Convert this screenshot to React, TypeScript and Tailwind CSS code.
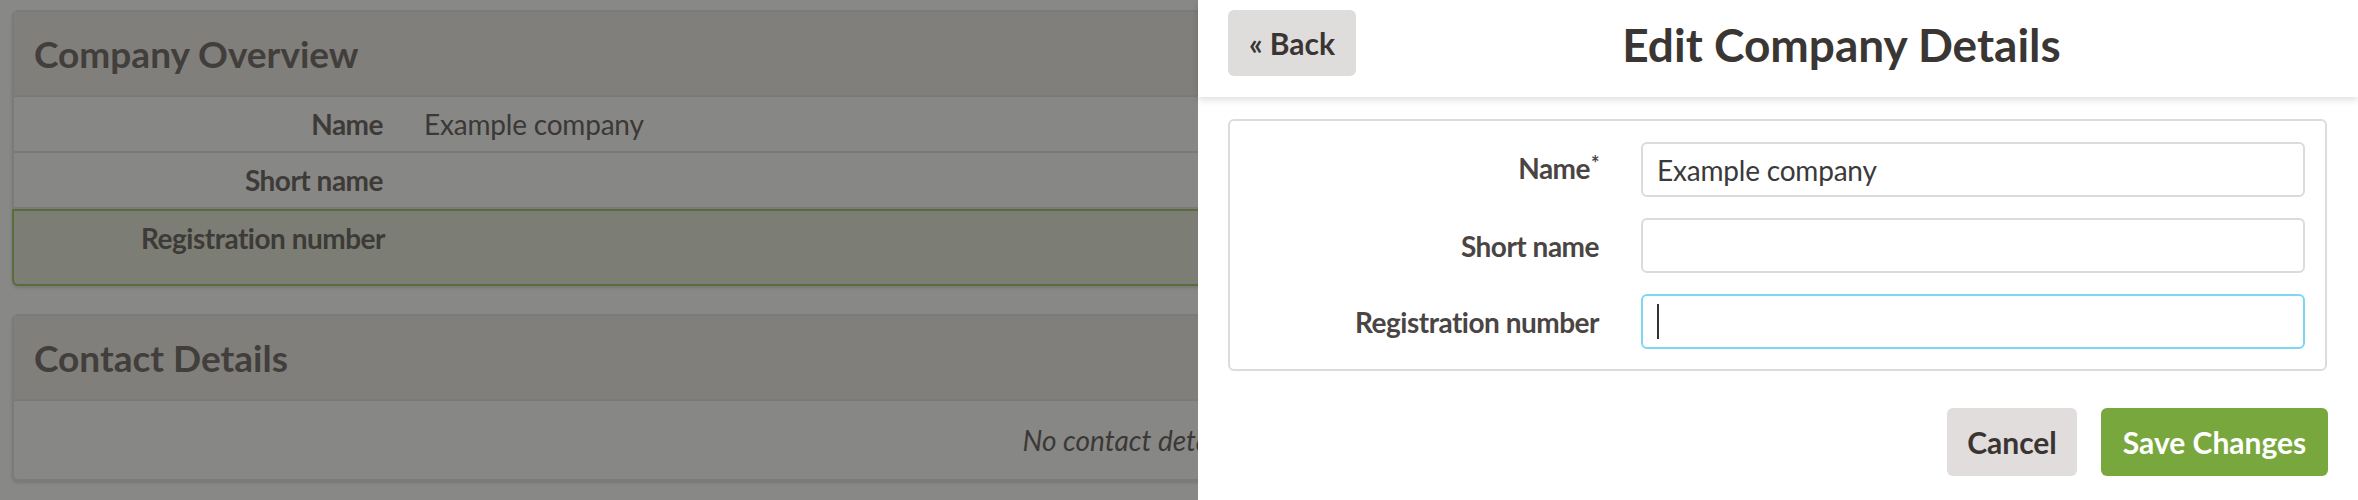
import React from "react";

function LeftRow({
  label,
  value,
  highlight,
}: {
  label: string;
  value?: string;
  highlight?: boolean;
}) {
  if (highlight) {
    return (
      <div className="-mx-[2px] -mb-[2px] flex h-[77px] items-start rounded-b-[6px] border-2 border-[#5b6b3b] bg-[#7c7e75] pt-[13px]">
        <div className="w-[371px] shrink-0 text-right text-[28px] font-bold leading-[28px] tracking-[-0.5px] text-[#3d3a37]">
          {label}
        </div>
        <div className="ml-[41px] text-[28px] leading-[28px] text-[#3b3836]">{value}</div>
      </div>
    );
  }
  return (
    <div className="flex h-[56px] items-center border-b-2 border-[#7b7a78]">
      <div className="w-[369px] shrink-0 text-right text-[28px] font-bold leading-[28px] tracking-[-0.5px] text-[#3d3a37]">
        {label}
      </div>
      <div className="ml-[41px] text-[28px] leading-[28px] tracking-[-0.2px] text-[#3b3836]">{value}</div>
    </div>
  );
}

function Field({
  label,
  required,
  value,
  focused,
}: {
  label: string;
  required?: boolean;
  value?: string;
  focused?: boolean;
}) {
  return (
    <div className="flex items-center">
      <div className="w-[369px] shrink-0 text-right text-[28px] font-bold leading-[28px] tracking-[-0.5px] text-[#4a4543]">
        {label}
        {required && <span className="relative -top-[8px] ml-[1px] text-[20px]">*</span>}
      </div>
      <div
        className={
          focused
            ? "ml-[42px] flex h-[55px] flex-1 items-center rounded-[6px] border-2 border-[#7dd7f3] pl-[14px]"
            : "ml-[42px] flex h-[55px] flex-1 items-center rounded-[6px] border-2 border-[#dcdada] pl-[14px]"
        }
      >
        {value && <span className="text-[28px] leading-[28px] tracking-[-0.2px] text-[#3a3a3a]">{value}</span>}
        {focused && <span className="block h-[35px] w-[2px] bg-[#333333]" />}
      </div>
    </div>
  );
}

export default function App() {
  return (
    <div className="relative h-[500px] w-[2358px] overflow-hidden bg-[#888886] font-[family-name:Lato,sans-serif]">
      {/* Background page (dimmed) */}
      <div className="flex flex-col gap-[28px] px-[12px] pt-[10px]">
        <div className="rounded-[6px] border-2 border-[#7c7b79] bg-[#878785] shadow-[0_2px_3px_rgba(0,0,0,0.12)]">
          <div className="flex h-[85px] items-center rounded-t-[5px] border-b-2 border-[#7b7a78] bg-[#807f7c] pl-[20px]">
            <h2 className="text-[37px] font-bold leading-none text-[#423e3b]">Company Overview</h2>
          </div>
          <LeftRow label="Name" value="Example company" />
          <LeftRow label="Short name" />
          <LeftRow label="Registration number" highlight />
        </div>

        <div className="rounded-[6px] border-2 border-[#7c7b79] bg-[#878785] shadow-[0_2px_3px_rgba(0,0,0,0.12)]">
          <div className="flex h-[85px] items-center rounded-t-[5px] border-b-2 border-[#7b7a78] bg-[#807f7c] pl-[20px]">
            <h2 className="text-[37px] font-bold leading-none text-[#423e3b]">Contact Details</h2>
          </div>
          <div className="flex h-[78px] items-center justify-center">
            <p className="text-[28px] italic leading-none text-[#3b3836]">No contact details entered.</p>
          </div>
        </div>
      </div>

      {/* Side panel */}
      <div className="absolute right-0 top-0 flex h-[500px] w-[1160px] flex-col bg-white">
        <div className="relative z-10 flex h-[97px] items-start bg-white pl-[30px] pr-[31px] pt-[10px] shadow-[0_3px_7px_rgba(0,0,0,0.13)]">
          <button className="h-[66px] w-[128px] rounded-[6px] bg-[#dfdddc] text-[30px] font-bold leading-none text-[#3a3533]">
            « Back
          </button>
          <h1 className="flex-1 pt-[2px] text-center text-[46px] font-bold leading-[66px] text-[#3a3634]">
            Edit Company Details
          </h1>
        </div>

        <div className="pl-[30px] pr-[31px] pt-[22px]">
          <div className="flex flex-col gap-[21px] rounded-[6px] border-2 border-[#dddcdc] pb-[20px] pr-[20px] pt-[21px]">
            <Field label="Name" required value="Example company" />
            <Field label="Short name" />
            <Field label="Registration number" focused />
          </div>
        </div>

        <div className="mt-[37px] flex justify-end gap-[24px] pr-[30px]">
          <button className="h-[68px] w-[130px] rounded-[6px] bg-[#e0dddc] text-[30px] font-bold leading-none text-[#3a3533]">
            Cancel
          </button>
          <button className="h-[68px] w-[227px] rounded-[6px] bg-[#78a83d] text-[30px] font-bold leading-none text-white">
            Save Changes
          </button>
        </div>
      </div>
    </div>
  );
}
